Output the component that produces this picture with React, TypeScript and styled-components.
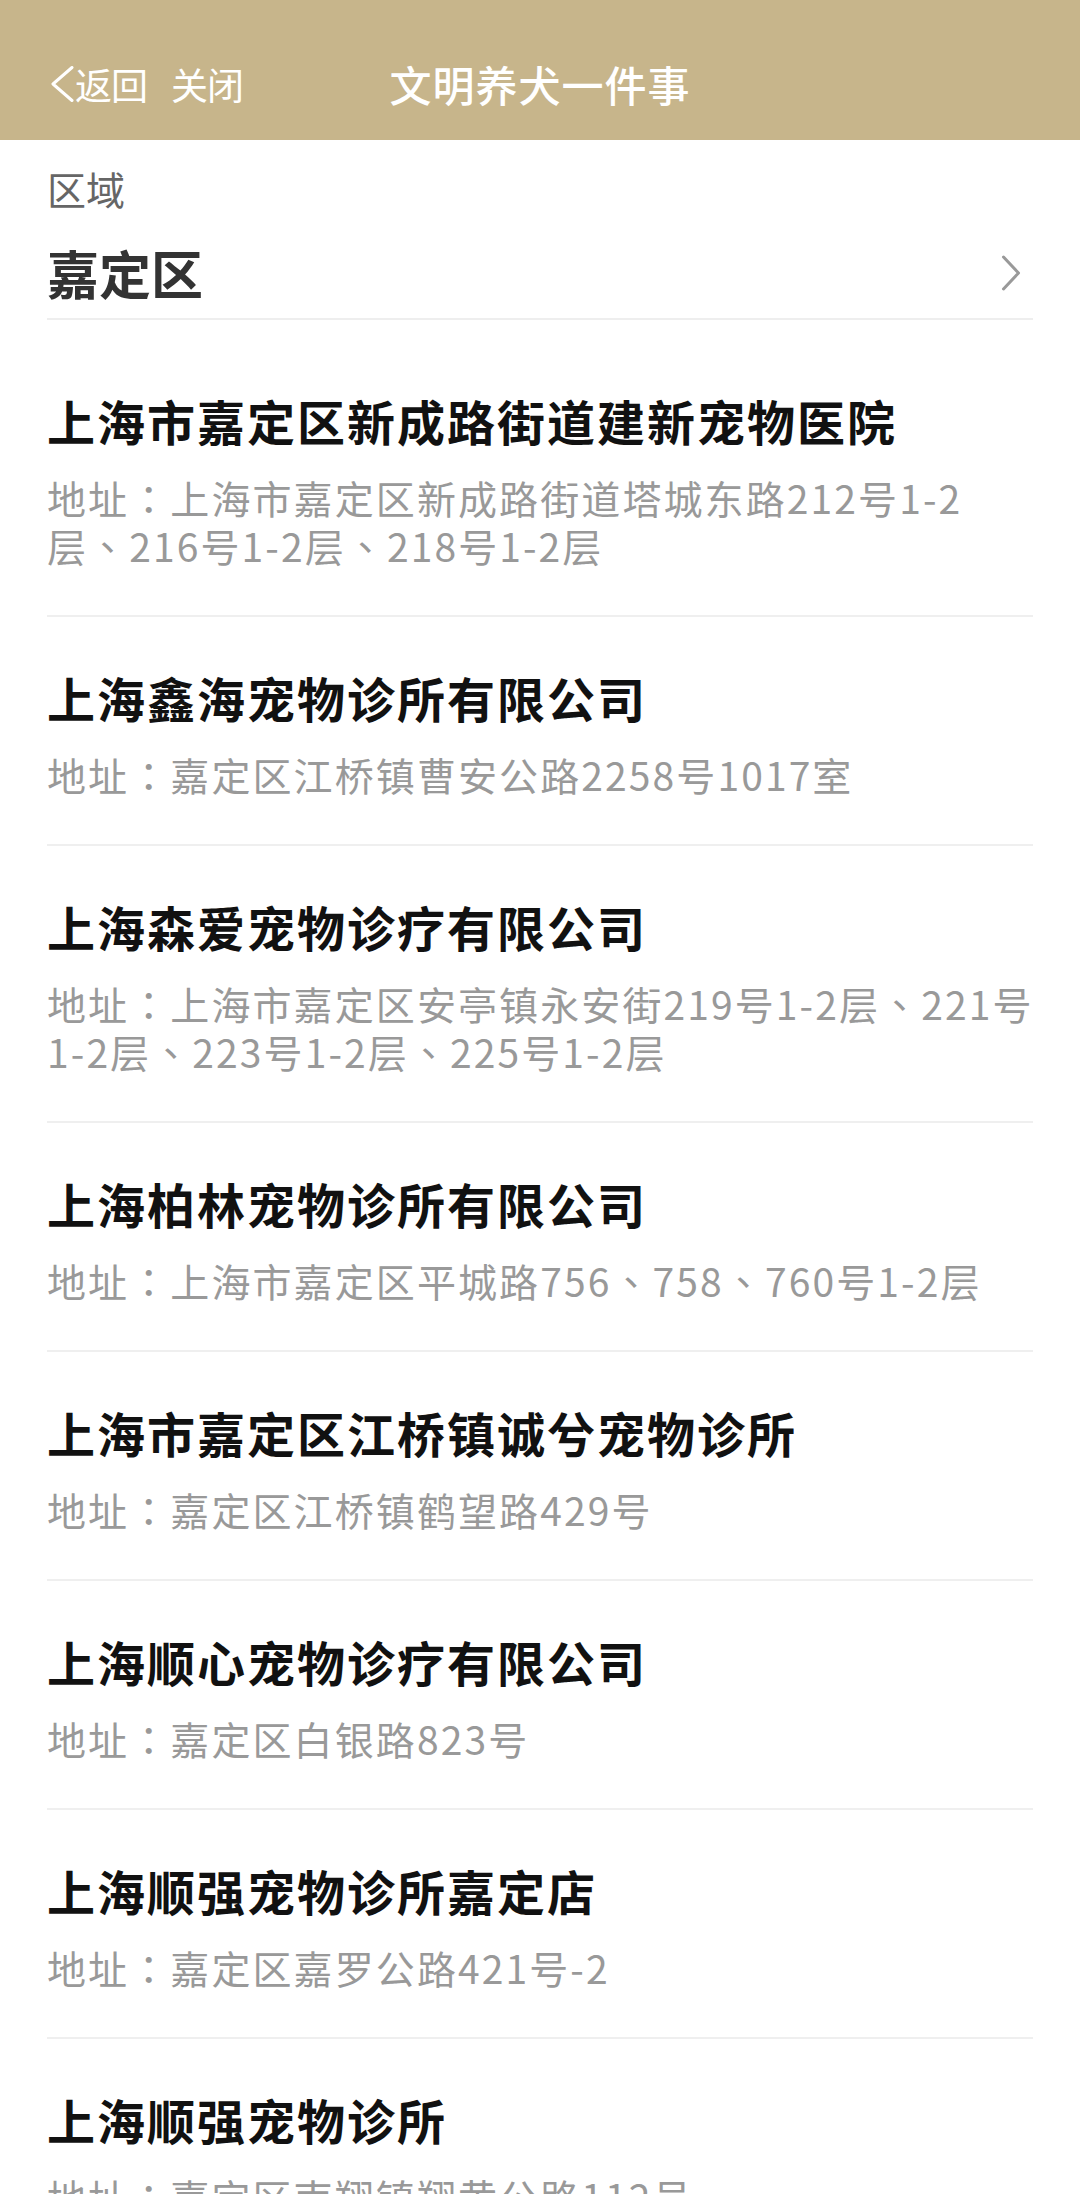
import React from "react";
import styled, { createGlobalStyle } from "styled-components";

const GlobalStyle = createGlobalStyle`
  html, body {
    margin: 0;
    padding: 0;
    background: #ffffff;
  }
  body {
    font-family: "Noto Sans CJK SC", "Noto Sans", sans-serif;
    -webkit-font-smoothing: antialiased;
  }
  * { box-sizing: border-box; }
`;

const Page = styled.div`
  width: 1080px;
  min-height: 2194px;
  background: #ffffff;
  overflow: hidden;
`;

const Header = styled.header`
  height: 140px;
  padding-top: 28px;
  background: #c7b58b;
  display: grid;
  grid-template-columns: 1fr auto 1fr;
  align-items: center;
  color: #ffffff;
`;

const NavLeft = styled.div`
  display: flex;
  align-items: center;
  padding-left: 50px;
  font-size: 37px;
  line-height: 48px;
`;

const NavButton = styled.span<{ $spaced?: boolean }>`
  margin-left: ${(p) => (p.$spaced ? "24px" : "0")};
  letter-spacing: -1px;
`;

const BackIcon = styled.svg`
  width: 25px;
  height: 36px;
  flex: none;
`;

const Title = styled.h1`
  margin: 0;
  font-size: 42px;
  line-height: 56px;
  font-weight: 500;
  letter-spacing: 1px;
  color: #ffffff;
`;

const RegionBlock = styled.section`
  margin: 0 47px;
  padding: 24px 0 15px;
  border-bottom: 2px solid #eeeeee;
`;

const RegionLabel = styled.div`
  font-size: 39px;
  line-height: 48px;
  color: #666666;
`;

const RegionRow = styled.div`
  margin-top: 31px;
  height: 60px;
  display: flex;
  align-items: center;
  justify-content: space-between;
`;

const RegionValue = styled.div`
  font-size: 52px;
  line-height: 60px;
  font-weight: 700;
  color: #333333;
`;

const Chevron = styled.svg`
  width: 20px;
  height: 36px;
  margin-right: 12px;
  flex: none;
`;

const List = styled.ul`
  list-style: none;
  margin: 20px 0 0;
  padding: 0;
`;

const Item = styled.li`
  margin: 0 47px;
  padding: 50px 0 46px;
  border-bottom: 2px solid #efefef;
`;

const ItemTitle = styled.div`
  font-size: 48px;
  line-height: 60px;
  font-weight: 700;
  letter-spacing: 2px;
  color: #111111;
  white-space: nowrap;
`;

const Address = styled.div`
  margin-top: 23px;
  font-size: 39px;
  line-height: 48px;
  letter-spacing: 2.1px;
  color: #999999;
`;

const AddressLine = styled.span`
  display: block;
  white-space: nowrap;
`;

const Punct = styled.span`
  font-family: "Noto Sans CJK TC", "Noto Sans CJK SC", sans-serif;
`;

type Clinic = { name: string; address: string[] };

const clinics: Clinic[] = [
  {
    name: "上海市嘉定区新成路街道建新宠物医院",
    address: ["地址：上海市嘉定区新成路街道塔城东路212号1-2", "层、216号1-2层、218号1-2层"],
  },
  { name: "上海鑫海宠物诊所有限公司", address: ["地址：嘉定区江桥镇曹安公路2258号1017室"] },
  {
    name: "上海森爱宠物诊疗有限公司",
    address: ["地址：上海市嘉定区安亭镇永安街219号1-2层、221号", "1-2层、223号1-2层、225号1-2层"],
  },
  { name: "上海柏林宠物诊所有限公司", address: ["地址：上海市嘉定区平城路756、758、760号1-2层"] },
  { name: "上海市嘉定区江桥镇诚兮宠物诊所", address: ["地址：嘉定区江桥镇鹤望路429号"] },
  { name: "上海顺心宠物诊疗有限公司", address: ["地址：嘉定区白银路823号"] },
  { name: "上海顺强宠物诊所嘉定店", address: ["地址：嘉定区嘉罗公路421号-2"] },
  { name: "上海顺强宠物诊所", address: ["地址：嘉定区南翔镇翔黄公路112号"] },
];

function renderLine(line: string) {
  return line.split(/([：、])/).map((part, i) =>
    part === "：" || part === "、" ? <Punct key={i}>{part}</Punct> : <React.Fragment key={i}>{part}</React.Fragment>
  );
}

export default function App() {
  return (
    <Page>
      <GlobalStyle />
      <Header>
        <NavLeft>
          <BackIcon viewBox="0 0 25 36">
            <path d="M22 1.5 L3 18 L22 34.5" fill="none" stroke="#ffffff" strokeWidth="3" strokeLinecap="round" strokeLinejoin="round" />
          </BackIcon>
          <NavButton>返回</NavButton>
          <NavButton $spaced>关闭</NavButton>
        </NavLeft>
        <Title>文明养犬一件事</Title>
        <div />
      </Header>

      <RegionBlock>
        <RegionLabel>区域</RegionLabel>
        <RegionRow>
          <RegionValue>嘉定区</RegionValue>
          <Chevron viewBox="0 0 20 36">
            <path d="M2.5 2 L17.5 18 L2.5 34" fill="none" stroke="#999999" strokeWidth="3" strokeLinecap="round" strokeLinejoin="round" />
          </Chevron>
        </RegionRow>
      </RegionBlock>

      <List>
        {clinics.map((c) => (
          <Item key={c.name}>
            <ItemTitle>{c.name}</ItemTitle>
            <Address>
              {c.address.map((line) => (
                <AddressLine key={line}>{renderLine(line)}</AddressLine>
              ))}
            </Address>
          </Item>
        ))}
      </List>
    </Page>
  );
}
